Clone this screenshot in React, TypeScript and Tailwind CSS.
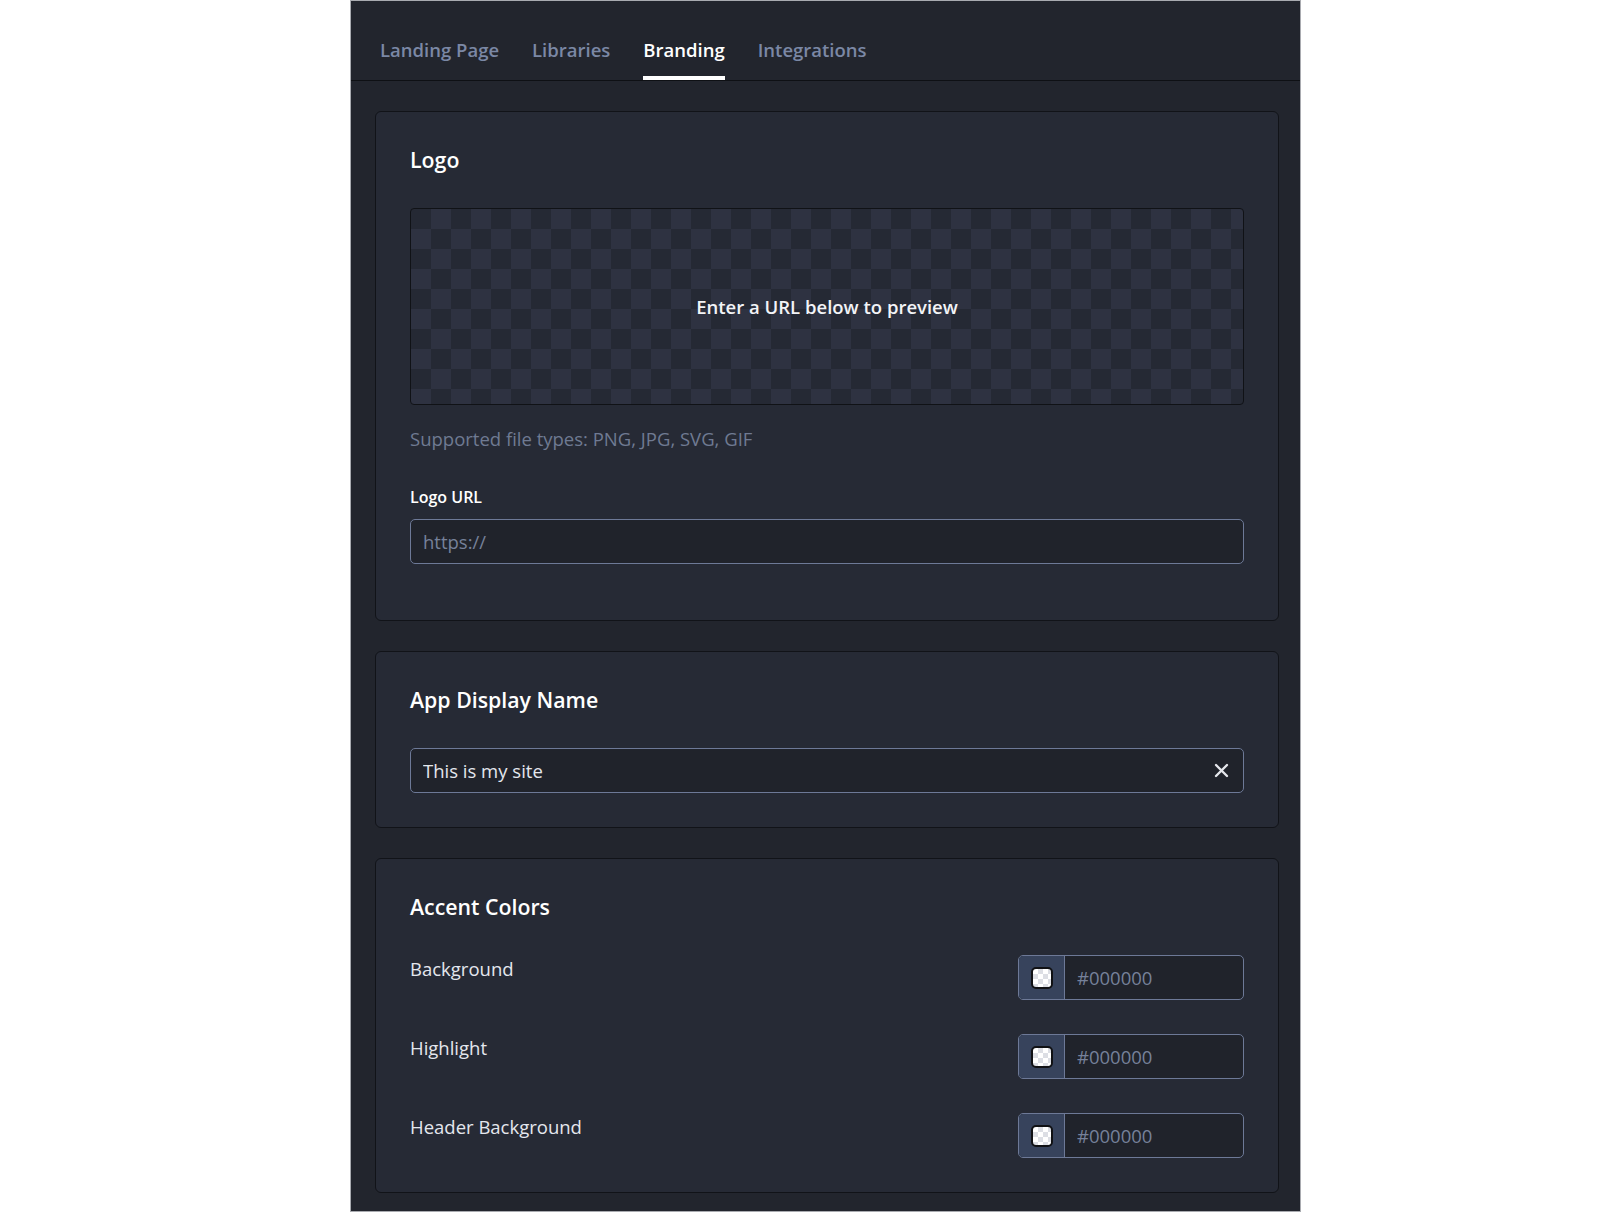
import React, { ReactNode } from 'react';
import clsx from 'clsx';

const tabs = ['Landing Page', 'Libraries', 'Branding', 'Integrations'];
const accentRows = ['Background', 'Highlight', 'Header Background'];

function Tabs({ active }: { active: string }) {
  return (
    <nav className="flex h-[80px] items-end gap-[33px] border-b border-[#0e1014] pl-[29px]">
      {tabs.map((t) => (
        <button
          key={t}
          className={clsx(
            'border-b-4 pb-[13px] text-[18.5px] font-semibold leading-[27px]',
            t === active ? 'border-white text-white' : 'border-transparent text-[#7b88a5]'
          )}
        >
          {t}
        </button>
      ))}
    </nav>
  );
}

function Card({ title, children, className }: { title: string; children: ReactNode; className?: string }) {
  return (
    <section className={clsx('rounded-md border border-[#111318] bg-[#262a35] px-[34px] pt-[34px] pb-[34px]', className)}>
      <h2 className="mb-[34px] text-[21.3px] font-semibold leading-[28px] text-white">{title}</h2>
      {children}
    </section>
  );
}

function ColorRow({ label }: { label: string }) {
  return (
    <div className="flex items-start justify-between">
      <span className="text-[18.5px] leading-[27px] text-[#e4e7ee]">{label}</span>
      <div className="flex h-[45px] w-[226px] overflow-hidden rounded-[5px] border border-[#6d7997] bg-[#20232b]">
        <div className="flex w-[46px] items-center justify-center border-r border-[#6d7997] bg-[#37435c]">
          <span className="h-[22px] w-[22px] rounded-[5px] border-2 border-[#101114] bg-[repeating-conic-gradient(#dcdee4_0%_25%,#ffffff_0%_50%)] bg-[length:10px_10px]" />
        </div>
        <input
          placeholder="#000000"
          className="min-w-0 flex-1 bg-transparent px-[12px] text-[18.5px] text-[#e4e7ee] outline-none placeholder:text-[#76819a]"
        />
      </div>
    </div>
  );
}

export default function App() {
  return (
    <div className="min-h-screen bg-white font-['Open_Sans',sans-serif]">
      <div className="ml-[350px] h-[1212px] w-[951px] border border-[#a9abb0] bg-[#22252d]">
        <Tabs active="Branding" />

        <div className="flex flex-col gap-[30px] pt-[30px] pl-[24px] pr-[21px]">
          {/* Logo */}
          <Card title="Logo" className="pb-[56px]">
            <div className="flex h-[197px] items-center justify-center rounded-[4px] border border-[#101216] bg-[repeating-conic-gradient(#2e3241_0%_25%,#252934_0%_50%)] bg-[length:40px_40px]">
              <span className="text-[18.5px] font-semibold text-[#f3f4f7]">Enter a URL below to preview</span>
            </div>
            <p className="mt-[20px] text-[18.5px] leading-[27px] text-[#6f7a92]">
              Supported file types: PNG, JPG, SVG, GIF
            </p>
            <label className="mt-[33px] block text-[16px] font-semibold leading-[24px] text-white">Logo URL</label>
            <input
              placeholder="https://"
              className="mt-[10px] block h-[45px] w-full rounded-[5px] border border-[#6d7997] bg-[#20232b] px-[12px] text-[18.5px] text-[#e4e7ee] outline-none placeholder:text-[#76819a]"
            />
          </Card>

          {/* App display name */}
          <Card title="App Display Name">
            <div className="flex h-[45px] items-center rounded-[5px] border border-[#6d7997] bg-[#20232b] pr-[14px]">
              <input
                defaultValue="This is my site"
                className="min-w-0 flex-1 bg-transparent px-[12px] text-[18.5px] text-[#e4e7ee] outline-none"
              />
              <button aria-label="Clear" className="flex h-[16px] w-[16px] items-center justify-center">
                <svg width="15" height="15" viewBox="0 0 15 15" fill="none">
                  <path d="M2 2l11 11M13 2L2 13" stroke="#e5e7ec" strokeWidth="2.4" strokeLinecap="round" />
                </svg>
              </button>
            </div>
          </Card>

          {/* Accent colors */}
          <Card title="Accent Colors">
            <div className="flex flex-col gap-[34px]">
              {accentRows.map((r) => (
                <ColorRow key={r} label={r} />
              ))}
            </div>
          </Card>
        </div>
      </div>
    </div>
  );
}
